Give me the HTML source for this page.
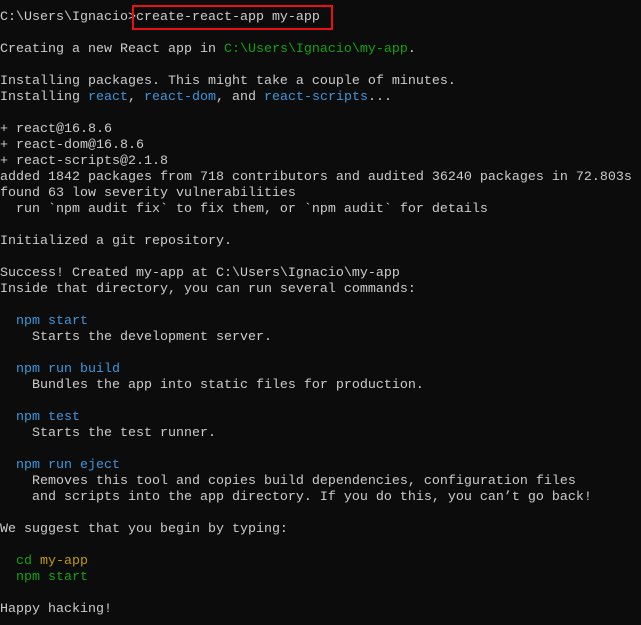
<!DOCTYPE html>
<html><head><meta charset="utf-8"><style>
html,body{margin:0;padding:0;background:#0c0c0c;width:641px;height:625px;overflow:hidden}
pre{margin:0;padding:10px 0 0 0;font-family:"Liberation Mono",monospace;font-size:13.33px;line-height:16px;color:#cccccc;white-space:pre}
.g{color:#13a10e}.b{color:#3a96dd}.y{color:#c19c00}
.box{position:absolute;left:132px;top:5px;width:197px;height:21px;border:2px solid #e81010}
</style></head><body>
<div class="box"></div>
<pre>C:\Users\Ignacio&gt;create-react-app my-app

Creating a new React app in <span class="g">C:\Users\Ignacio\my-app</span>.

Installing packages. This might take a couple of minutes.
Installing <span class="b">react</span>, <span class="b">react-dom</span>, and <span class="b">react-scripts</span>...

+ react@16.8.6
+ react-dom@16.8.6
+ react-scripts@2.1.8
added 1842 packages from 718 contributors and audited 36240 packages in 72.803s
found 63 low severity vulnerabilities
  run `npm audit fix` to fix them, or `npm audit` for details

Initialized a git repository.

Success! Created my-app at C:\Users\Ignacio\my-app
Inside that directory, you can run several commands:

  <span class="b">npm start</span>
    Starts the development server.

  <span class="b">npm run build</span>
    Bundles the app into static files for production.

  <span class="b">npm test</span>
    Starts the test runner.

  <span class="b">npm run eject</span>
    Removes this tool and copies build dependencies, configuration files
    and scripts into the app directory. If you do this, you can’t go back!

We suggest that you begin by typing:

  <span class="g">cd</span> <span class="y">my-app</span>
  <span class="g">npm start</span>

Happy hacking!</pre>
</body></html>
